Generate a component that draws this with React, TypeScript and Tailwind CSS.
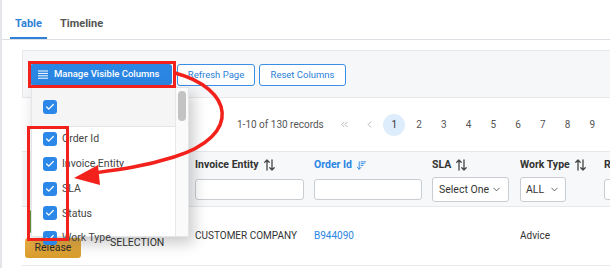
import React from 'react';
import { ChevronDown, ChevronLeft, ChevronsLeft, ArrowDownWideNarrow, Check } from 'lucide-react';

const columnOptions = ['Order Id', 'Invoice Entity', 'SLA', 'Status', 'Work Type'];
const pages = [1, 2, 3, 4, 5, 6, 7, 8, 9];

const SortIcon = () => (
  <svg width="11" height="12" viewBox="0 0 11 12" fill="none" stroke="#444" strokeWidth="1.3" strokeLinecap="round" strokeLinejoin="round">
    <path d="M3 11V1M0.8 3.2L3 1l2.2 2.2" />
    <path d="M8 1v10M5.8 8.8L8 11l2.2-2.2" />
  </svg>
);

const Box = () => (
  <span className="flex h-[14px] w-[14px] shrink-0 items-center justify-center rounded-[3px] bg-[#2b87e8]">
    <Check className="h-[10px] w-[10px] text-white" strokeWidth={3} />
  </span>
);

const App = () => {
  return (
    <div className="relative h-[268px] w-[610px] overflow-hidden border-l-2 border-[#e3e5e8] bg-white font-['Roboto',sans-serif] text-[#333]">
      {/* tabs */}
      <div className="flex pl-[8px] pt-[15px] border-b border-[#dcdfe3] h-[40px]">
        <div className="w-[37px] h-full border-b-2 border-[#2f80d8] -mb-px text-center text-[11px] font-bold text-[#2f80d8] leading-[18px]">Table</div>
        <div className="ml-[9px] px-1 text-[11px] font-bold text-[#555] leading-[18px]">Timeline</div>
      </div>

      <div className="ml-[20px] mt-[10px]">
        {/* toolbar */}
        <div className="flex h-[48px] gap-[4px] border-y border-l border-[#e6e8eb] bg-[#f6f7f9] pl-[7px] pt-[13px]">
          <button className="flex h-[21px] w-[142px] items-center gap-[6px] whitespace-nowrap rounded-[3px] bg-[#2a86e2] pl-[8px] text-[9.5px] font-medium text-white">
            <svg width="10" height="9" viewBox="0 0 10 9" fill="none" stroke="white" strokeWidth="1">
              <path d="M0 1h10M0 3.4h10M0 5.8h10M0 8.2h10" />
            </svg>
            Manage Visible Columns
          </button>
          <button className="ml-[1px] h-[22px] w-[78px] whitespace-nowrap rounded-[3px] border border-[#3b8ee6] bg-white text-[9.5px] text-[#2a7fd6]">Refresh Page</button>
          <button className="h-[22px] w-[87px] whitespace-nowrap rounded-[3px] border border-[#3b8ee6] bg-white text-[9.5px] text-[#2a7fd6]">Reset Columns</button>
        </div>

        {/* pagination */}
        <div className="flex h-[53px] items-center pl-[215px] text-[10px] text-[#555]">
          <span className="w-[86px] whitespace-nowrap">1-10 of 130 records</span>
          <div className="ml-[8px] flex items-center">
            <span className="flex w-[26px] justify-center text-[#aab0b8]"><ChevronsLeft className="h-[11px] w-[11px]" /></span>
            <span className="flex w-[25px] justify-center text-[#aab0b8]"><ChevronLeft className="h-[11px] w-[11px]" /></span>
            {pages.map((p) => (
              <span key={p} className="flex w-[24.75px] justify-center">
                <span className={p === 1 ? 'flex h-[22px] w-[22px] items-center justify-center rounded-full bg-[#deedfb] text-[#333]' : 'flex h-[22px] w-[22px] items-center justify-center'}>{p}</span>
              </span>
            ))}
          </div>
        </div>

        {/* table header */}
        <div className="grid h-[56px] grid-cols-[80px_85px_119px_118px_88px_84px_1fr] border-y border-[#e6e8eb] bg-[#f7f8fa] pt-[6px]">
          <div />
          <div />
          <div className="flex flex-col gap-[7px] px-2">
            <div className="flex items-center gap-[5px] whitespace-nowrap text-[10.5px] font-bold leading-[14px]">Invoice Entity <SortIcon /></div>
            <div className="h-[21px] w-[109px] rounded-[3px] border border-[#c9cdd2] bg-white" />
          </div>
          <div className="flex flex-col gap-[7px] px-2">
            <div className="flex items-center gap-[4px] whitespace-nowrap text-[10.5px] font-bold leading-[14px] text-[#2a86e2]">Order Id <ArrowDownWideNarrow className="h-[11px] w-[11px]" strokeWidth={2} /></div>
            <div className="h-[21px] w-[108px] rounded-[3px] border border-[#c9cdd2] bg-white" />
          </div>
          <div className="flex flex-col gap-[5px] px-2">
            <div className="flex items-center gap-[5px] text-[10.5px] font-bold leading-[14px]">SLA <SortIcon /></div>
            <div className="flex h-[25px] w-[77px] items-center justify-between whitespace-nowrap rounded-[3px] border border-[#c9cdd2] bg-white px-[6px] text-[10.5px]">
              Select One <ChevronDown className="h-[11px] w-[11px] text-[#555]" />
            </div>
          </div>
          <div className="flex flex-col gap-[5px] px-2">
            <div className="flex items-center gap-[5px] whitespace-nowrap text-[10.5px] font-bold leading-[14px]">Work Type <SortIcon /></div>
            <div className="flex h-[25px] w-[46px] items-center justify-between rounded-[3px] border border-[#c9cdd2] bg-white px-[5px] text-[10.5px]">
              ALL <ChevronDown className="h-[11px] w-[11px] text-[#555]" />
            </div>
          </div>
          <div className="flex flex-col gap-[7px] px-2">
            <div className="text-[10.5px] font-bold leading-[14px]">R</div>
            <div className="h-[21px] w-[80px] rounded-[3px] border border-[#c9cdd2] bg-white" />
          </div>
        </div>

        {/* row */}
        <div className="grid h-[59px] grid-cols-[80px_85px_119px_118px_88px_84px_1fr] border-b border-[#e6e8eb] text-[10px]">
          <div className="flex flex-col gap-[5px] pl-[3px] pt-[3px]">
            <div className="ml-[4px] h-[23px] w-[52px] rounded-[3px] bg-[#5c9a3e]" />
            <div className="h-[20px] w-[56px] rounded-[3px] bg-gradient-to-b from-[#e8b04a] to-[#d99c2a] text-center text-[10.5px] leading-[20px] text-[#2d2d2d]">Release</div>
          </div>
          <div className="flex items-center whitespace-nowrap pl-[8px] pt-[14px] text-[10.5px]">SELECTION</div>
          <div className="flex items-center whitespace-nowrap px-2 pb-[2px]">CUSTOMER COMPANY</div>
          <div className="flex items-center px-2 pb-[2px] text-[#2a86e2]">B944090</div>
          <div className="px-2" />
          <div className="flex items-center px-2 pb-[2px]">Advice</div>
          <div />
        </div>
      </div>

      {/* column picker dropdown */}
      <div className="absolute left-[29px] top-[87px] flex h-[150px] w-[158px] border border-[#e3e5e8] bg-white shadow-[4px_6px_14px_rgba(0,0,0,0.22)]">
        <div className="flex-1">
          <div className="flex h-[39px] items-center border-b border-[#e3e5e8] bg-[#f5f5f6] pl-[11px]">
            <Box />
          </div>
          {columnOptions.map((c) => (
            <div key={c} className="flex h-[24.7px] items-center gap-[5px] pl-[11px] text-[10.5px] text-[#444]">
              <Box />
              {c}
            </div>
          ))}
        </div>
        <div className="w-[13px] border-l border-[#e8e8e8] bg-[#fafafa] pt-[3px]">
          <div className="mx-auto h-[30px] w-[8px] rounded-full bg-[#c3c3c3]" />
        </div>
      </div>

      {/* annotations */}
      <div className="absolute left-[26px] top-[61px] h-[27px] w-[148px] border-[3px] border-[#f2211b]" />
      <div className="absolute left-[25px] top-[126px] h-[115px] w-[42px] border-[3px] border-[#f2211b]" />
      <svg className="absolute left-0 top-0" width="610" height="268" viewBox="0 0 610 268" fill="none">
        <path d="M173 73 C 230 88, 242 135, 172 157 C 140 167, 115 170, 92 173" stroke="#f2211b" strokeWidth="3.5" strokeLinecap="round" />
        <path d="M72 178 L96 165 L98 185 Z" fill="#f2211b" />
      </svg>
    </div>
  );
};

export default App;
